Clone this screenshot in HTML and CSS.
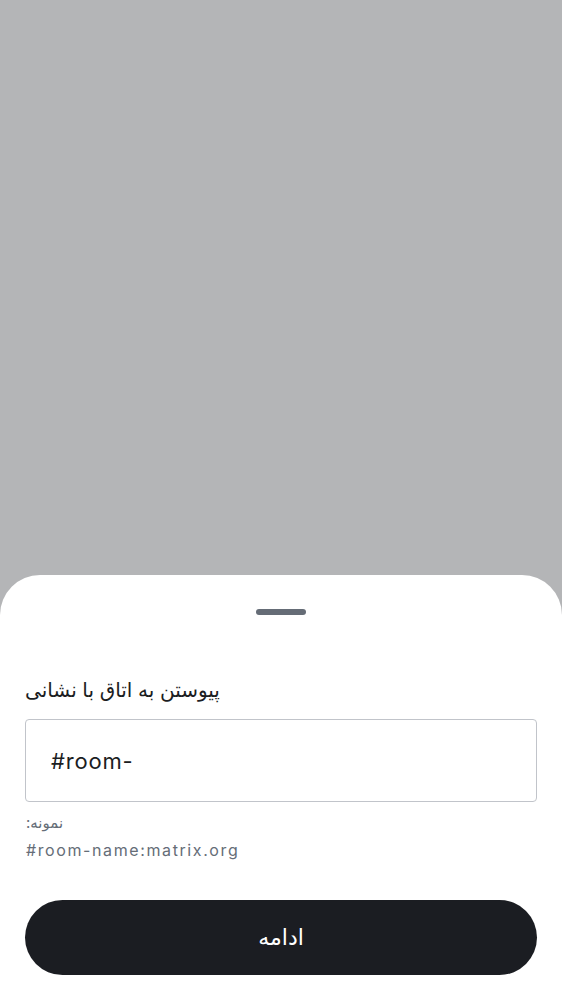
FILE: index.html
```html
<!DOCTYPE html>
<html lang="fa">
<head>
<meta charset="utf-8">
<link rel="stylesheet" href="styles.css">
</head>
<body>
<div class="screen">
  <div class="scrim"></div>
  <div class="sheet">
    <div class="handle"></div>
    <div class="title" dir="rtl">پیوستن به اتاق با نشانی</div>
    <div class="field"><span class="value">#room-</span></div>
    <div class="hint-label" dir="rtl">نمونه:</div>
    <div class="hint-example">#room-name:matrix.org</div>
    <button class="continue" dir="rtl">ادامه</button>
  </div>
</div>
</body>
</html>
```
FILE: styles.css
```css
html, body {
  margin: 0;
  padding: 0;
}
body {
  font-family: Inter, "DejaVu Sans", sans-serif;
  background: #b4b5b7;
}
.screen {
  width: 562px;
  height: 1000px;
  display: flex;
  flex-direction: column;
  background: #b4b5b7;
}
.scrim {
  flex: 1;
}
.sheet {
  background: #ffffff;
  border-radius: 40px 40px 0 0;
  height: 425px;
  padding: 34px 25px 0 25px;
  box-sizing: border-box;
  display: flex;
  flex-direction: column;
}
.handle {
  align-self: center;
  width: 50px;
  height: 6px;
  border-radius: 3px;
  background: #656c76;
}
.title {
  margin-top: 62px;
  font-size: 20px;
  line-height: 26px;
  color: #1b1d22;
  text-align: left;
  align-self: flex-start;
}
.field {
  margin-top: 16px;
  height: 83px;
  border: 1px solid #c1c4ca;
  border-radius: 4px;
  box-sizing: border-box;
  display: flex;
  align-items: center;
  padding-left: 25px;
}
.value {
  font-size: 22px;
  letter-spacing: 0.8px;
  color: #1b1d22;
}
.hint-label {
  margin-top: 11px;
  font-size: 15px;
  line-height: 20px;
  color: #656d77;
  align-self: flex-start;
  padding-left: 1px;
}
.hint-example {
  margin-top: 6px;
  font-size: 16px;
  line-height: 22px;
  letter-spacing: 1.6px;
  color: #656d77;
  padding-left: 1px;
}
.continue {
  margin-top: 39px;
  height: 75px;
  border: none;
  border-radius: 38px;
  background: #1b1d22;
  color: #ffffff;
  font-family: Inter, "DejaVu Sans", sans-serif;
  font-size: 22px;
  line-height: 26px;
  padding: 0 0 2px 0;
}
```
